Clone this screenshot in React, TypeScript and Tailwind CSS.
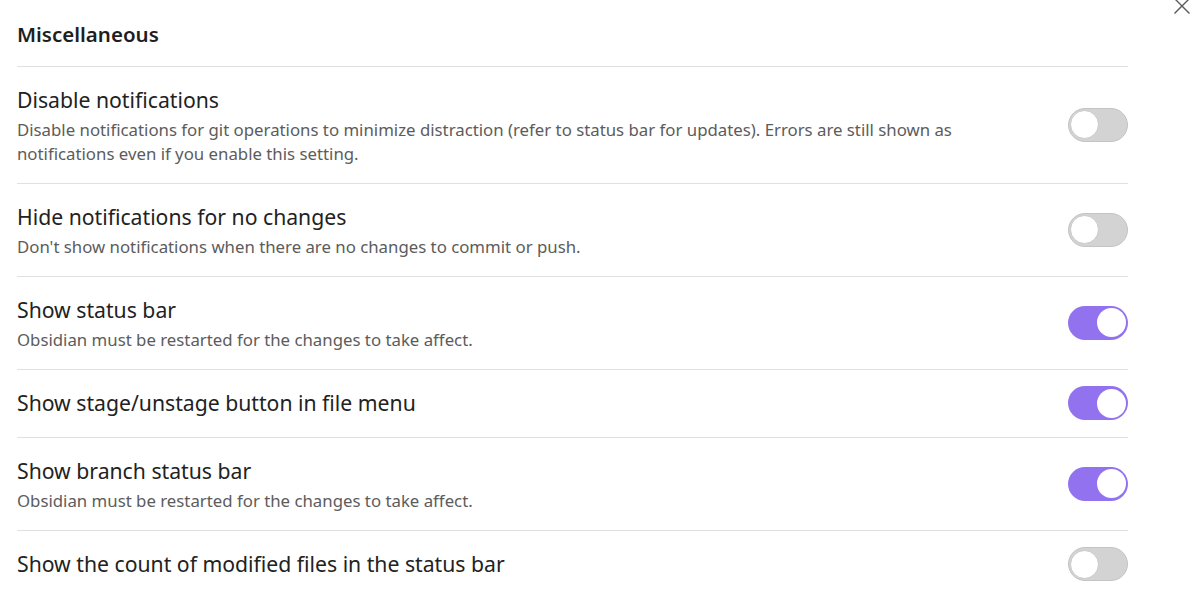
import React from "react";

type Item = { name: string; desc?: string; on: boolean };

const items: Item[] = [
  {
    name: "Disable notifications",
    desc: "Disable notifications for git operations to minimize distraction (refer to status bar for updates). Errors are still shown as notifications even if you enable this setting.",
    on: false,
  },
  {
    name: "Hide notifications for no changes",
    desc: "Don't show notifications when there are no changes to commit or push.",
    on: false,
  },
  {
    name: "Show status bar",
    desc: "Obsidian must be restarted for the changes to take affect.",
    on: true,
  },
  { name: "Show stage/unstage button in file menu", on: true },
  {
    name: "Show branch status bar",
    desc: "Obsidian must be restarted for the changes to take affect.",
    on: true,
  },
  { name: "Show the count of modified files in the status bar", on: false },
];

function Toggle({ on }: { on: boolean }) {
  return on ? (
    <div className="w-[60px] h-[34px] rounded-full bg-[#9372f0] flex items-center justify-end pr-[2px] shrink-0">
      <div className="w-[29px] h-[29px] rounded-full bg-white" />
    </div>
  ) : (
    <div className="w-[60px] h-[34px] rounded-full bg-[#d3d3d3] border border-[#c4c4c4] flex items-center justify-start pl-[1px] shrink-0">
      <div className="w-[29px] h-[29px] rounded-full bg-white border border-[#c8c8c8]" />
    </div>
  );
}

export default function App() {
  return (
    <div
      className="relative w-[1197px] h-[607px] bg-white overflow-hidden"
      style={{ fontFamily: '"Noto Sans", "Open Sans", sans-serif' }}
    >
      <svg
        className="absolute left-[1173px] top-[-3px]"
        width="18"
        height="18"
        viewBox="0 0 18 18"
      >
        <path d="M1.5 1.5 L16.5 16.5 M16.5 1.5 L1.5 16.5" stroke="#5a5a5a" strokeWidth="1.4" fill="none" />
      </svg>
      <div className="ml-[17px] w-[1111px]">
        <div className="pt-[19px] h-[67px] border-b border-[#e0e0e0] box-border">
          <div className="text-[20.5px] leading-[30px] font-semibold text-[#1e1e1e]">
            Miscellaneous
          </div>
        </div>
        {items.map((it, i) => (
          <div
            key={i}
            className={
              "flex items-center pt-[16px] pb-[17px] " +
              (i < items.length - 1 ? "border-b border-[#e0e0e0]" : "")
            }
          >
            <div className="flex-1 mr-[60px]">
              <div className="text-[21.2px] leading-[34px] text-[#222222]">
                {it.name}
              </div>
              {it.desc && (
                <div className="mt-[1px] text-[16.8px] leading-[24px] text-[#5c5c5c]">
                  {it.desc}
                </div>
              )}
            </div>
            <Toggle on={it.on} />
          </div>
        ))}
      </div>
    </div>
  );
}
